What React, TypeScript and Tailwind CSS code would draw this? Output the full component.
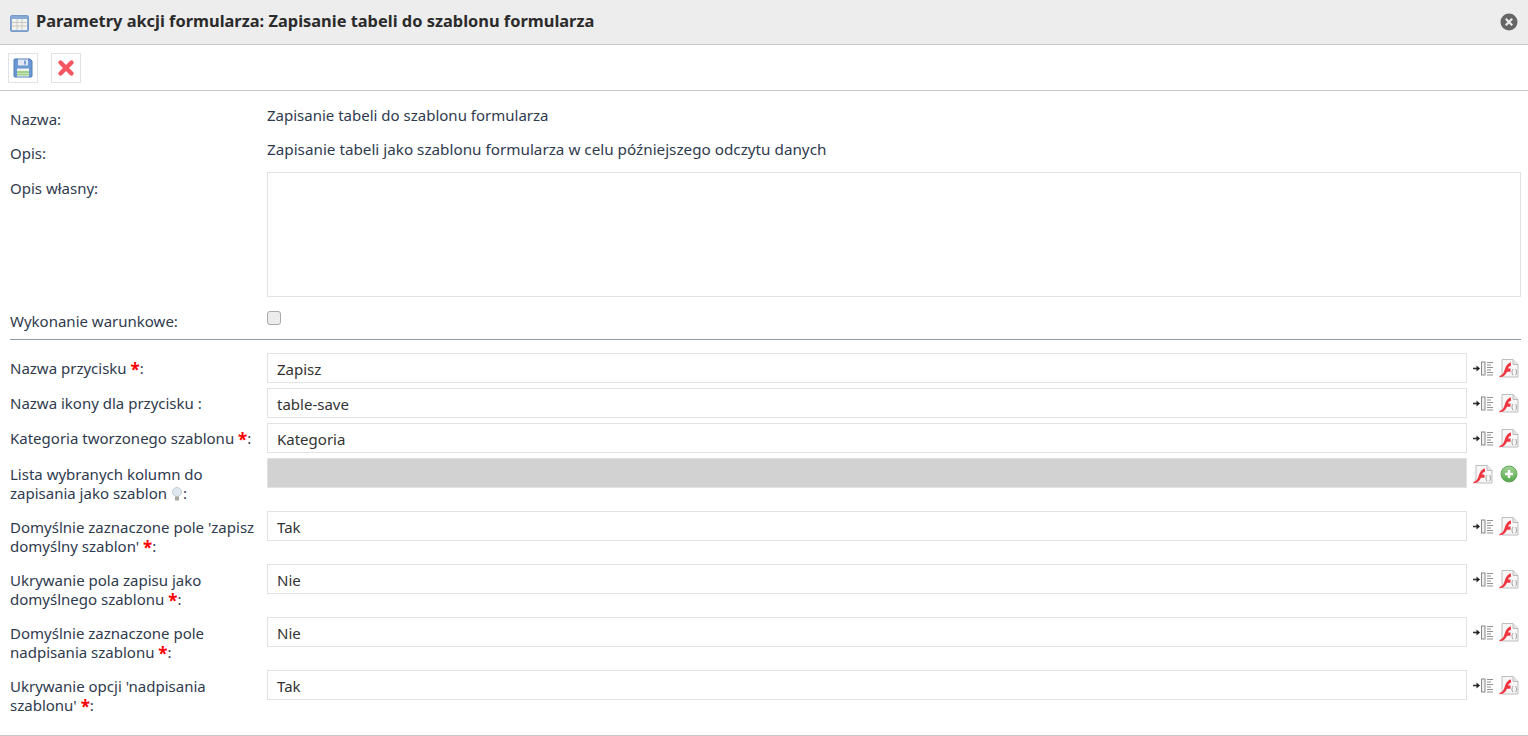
import React from "react";

function Pass() {
  return (
    <svg width="22" height="18" viewBox="0 0 22 18" className="block mt-[1px]">
      <path d="M0 8.5h5" stroke="#333" strokeWidth="1.6" />
      <path d="M3.5 5.5l3.5 3-3.5 3z" fill="#222" />
      <rect x="8.5" y="2" width="3.5" height="13" fill="#f0f0f0" stroke="#8a8a8a" strokeWidth="1" />
      <path d="M14 2.5h6M14 5h4M14 7.5h6M14 10h4M14 12.5h6M14 15h6" stroke="#909090" strokeWidth="1.1" />
    </svg>
  );
}

function Flash() {
  return (
    <svg width="20" height="20" viewBox="0 0 20 20" className="block">
      <path d="M3 1.5h11l5 5v12.5h-16z" fill="#f7f7f7" stroke="#bdbdbd" strokeWidth="1" />
      <path d="M14 1.5v5h5" fill="#e4e4e4" stroke="#bdbdbd" strokeWidth="1" />
      <path d="M0.5 18c3.2-.6 4.3-3.2 5.3-6.4s2.4-6.6 6.2-7.2v3.4c-1.8.4-2.4 1.5-2.9 2.8h2.4v3.2h-3.5c-1.3 3-3.3 5.2-7.5 5.6z" fill="#ee3540" />
      <path d="M14 11c-1.3 1.3-1.3 5 0 6.3M16.5 11c1.3 1.3 1.3 5 0 6.3" fill="none" stroke="#a0a0a0" strokeWidth="1" />
    </svg>
  );
}

function Plus() {
  return (
    <svg width="18" height="18" viewBox="0 0 18 18" className="block">
      <defs>
        <linearGradient id="gp" x1="0" y1="0" x2="0" y2="1">
          <stop offset="0" stopColor="#a4d596" />
          <stop offset="1" stopColor="#52a749" />
        </linearGradient>
      </defs>
      <circle cx="9" cy="9" r="8" fill="url(#gp)" stroke="#68a960" strokeWidth="1" />
      <path d="M9 5v8M5 9h8" stroke="#fff" strokeWidth="2.4" />
    </svg>
  );
}

function Req() {
  return <span className="font-bold text-[#ff0000] text-[17px] leading-[1px] align-[-2px]">*</span>;
}

function Row({ label, value, top, h, gap }: { label: React.ReactNode; value: string; top: string; h: string; gap: string }) {
  return (
    <div className={`flex ${h} ${gap}`}>
      <div className={`w-[267px] shrink-0 pl-[10px] pr-1 leading-[19px] ${top}`}>{label}</div>
      <div className="w-[1200px] h-[30px] shrink-0 border border-[#e2e2e2] bg-white pl-[9px] leading-[30px] text-[#333]">{value}</div>
      <div className="flex items-start pl-[6px] pt-[6px]">
        <Pass />
        <span className="ml-[4px] -mt-[1px]"><Flash /></span>
      </div>
    </div>
  );
}

export default function App() {
  return (
    <div className="w-[1528px] h-[736px] overflow-hidden bg-white text-[15px] text-[#2f3a4e] font-['Noto_Sans',sans-serif] flex flex-col">
      <header className="h-[45px] shrink-0 bg-[#ededed] border-b border-[#c8c8c8] flex items-center pl-[10px] pr-[10px]">
        <svg width="19" height="17" viewBox="0 0 19 17" className="block mt-[3px]">
          <rect x="0.5" y="0.5" width="18" height="16" rx="1.5" fill="#86a9d6" stroke="#7a9bc8" />
          <rect x="2" y="4" width="15" height="11" fill="#f2f2ee" />
          <path d="M2 7.5h15M2 11h15M7 4v11M12 4v11" stroke="#c9c9c4" strokeWidth="1" />
        </svg>
        <span className="ml-[7px] mb-[2px] font-bold text-[#2b2b2b] text-[16.4px] leading-[20px] flex-1">Parametry akcji formularza: Zapisanie tabeli do szablonu formularza</span>
        <svg width="18" height="18" viewBox="0 0 18 18" className="block">
          <circle cx="9" cy="9" r="8.5" fill="#666" />
          <path d="M5.8 5.8l6.4 6.4M12.2 5.8l-6.4 6.4" stroke="#eee" strokeWidth="2.2" />
        </svg>
      </header>

      <div className="h-[46px] shrink-0 border-b border-[#c8c8c8] flex items-center pl-[8px] gap-[13px]">
        <button className="w-[30px] h-[30px] border border-[#e2e2e2] flex items-center justify-center">
          <svg width="20" height="20" viewBox="0 0 20 20" className="block">
            <path d="M1 2a1 1 0 0 1 1-1h15l2 2v15a1 1 0 0 1-1 1H2a1 1 0 0 1-1-1z" fill="#6b97d2" stroke="#4f7cb8" strokeWidth="1" />
            <rect x="5" y="1.5" width="10" height="6" fill="#dfe8f4" />
            <rect x="11" y="2.5" width="2" height="4" fill="#7c9fd0" />
            <rect x="4" y="10.5" width="12" height="8" fill="#eef3ea" />
            <path d="M4 14h12M4 16.5h12" stroke="#9fd08d" strokeWidth="2" />
          </svg>
        </button>
        <button className="w-[30px] h-[30px] border border-[#e2e2e2] flex items-center justify-center">
          <svg width="18" height="18" viewBox="0 0 18 18" className="block">
            <path d="M3.5 3.5l11 11M14.5 3.5l-11 11" stroke="#f4565f" strokeWidth="4.4" strokeLinecap="round" />
          </svg>
        </button>
      </div>

      <div className="flex h-[34px] shrink-0">
        <div className="w-[257px] shrink-0 pl-[10px] pt-[19px] leading-[19px]">Nazwa:</div>
        <div className="pl-[10px] pt-[15px] leading-[19px]">Zapisanie tabeli do szablonu formularza</div>
      </div>
      <div className="flex h-[34px] shrink-0">
        <div className="w-[257px] shrink-0 pl-[10px] pt-[19px] leading-[19px]">Opis:</div>
        <div className="pl-[10px] pt-[15px] leading-[19px] text-[15.25px]">Zapisanie tabeli jako szablonu formularza w celu późniejszego odczytu danych</div>
      </div>
      <div className="flex shrink-0 mt-[13px]">
        <div className="w-[267px] shrink-0 pl-[10px] pt-[7px] leading-[19px]">Opis własny:</div>
        <div className="w-[1254px] h-[125px] border border-[#e2e2e2]" />
      </div>
      <div className="flex h-[37px] shrink-0 mt-[5px]">
        <div className="w-[267px] shrink-0 pl-[10px] pt-[10px] leading-[19px]">Wykonanie warunkowe:</div>
        <div className="pt-[9px]">
          <div className="w-[14px] h-[14px] rounded-[3px] border border-[#a9a9a9] bg-[#ececec]" />
        </div>
      </div>
      <div className="ml-[10px] w-[1511px] h-px bg-[#8a9bb0] shrink-0" />

      <div className="flex flex-col mt-[13px]">
        <Row h="h-[30px]" gap="mb-[5px]" top="pt-[6px]" value="Zapisz" label={<>Nazwa przycisku <Req />:</>} />
        <Row h="h-[30px]" gap="mb-[5px]" top="pt-[6px]" value="table-save" label="Nazwa ikony dla przycisku :" />
        <Row h="h-[30px]" gap="mb-[5px]" top="pt-[6px]" value="Kategoria" label={<>Kategoria tworzonego szablonu <Req />:</>} />
        <div className="flex h-[47px] mb-[6px]">
          <div className="w-[267px] shrink-0 pl-[10px] pr-1 pt-[7px] leading-[19px]">
            Lista wybranych kolumn do zapisania jako szablon{" "}
            <svg width="12" height="14" viewBox="0 0 12 14" className="inline-block align-[-2px]">
              <circle cx="6" cy="5" r="4.5" fill="#dfe8ee" stroke="#c4ccd0" />
              <rect x="4" y="9.5" width="4" height="4" fill="#a8a8a0" />
            </svg>
            :
          </div>
          <div className="w-[1200px] h-[30px] shrink-0 border border-[#e2e2e2] bg-[#d2d2d2]" />
          <div className="flex items-start pl-[6px] pt-[7px] gap-[7px]">
            <span className="-mt-[1px]"><Flash /></span>
            <Plus />
          </div>
        </div>
        <Row h="h-[47px]" gap="mb-[6px]" top="pt-[7px]" value="Tak" label={<>Domyślnie zaznaczone pole 'zapisz domyślny szablon' <Req />:</>} />
        <Row h="h-[47px]" gap="mb-[6px]" top="pt-[7px]" value="Nie" label={<>Ukrywanie pola zapisu jako domyślnego szablonu <Req />:</>} />
        <Row h="h-[47px]" gap="mb-[6px]" top="pt-[7px]" value="Nie" label={<>Domyślnie zaznaczone pole nadpisania szablonu <Req />:</>} />
        <Row h="h-[47px]" gap="mb-0" top="pt-[7px]" value="Tak" label={<>Ukrywanie opcji 'nadpisania szablonu' <Req />:</>} />
      </div>
      <div className="mt-auto h-px bg-[#c8c8c8]" />
    </div>
  );
}
